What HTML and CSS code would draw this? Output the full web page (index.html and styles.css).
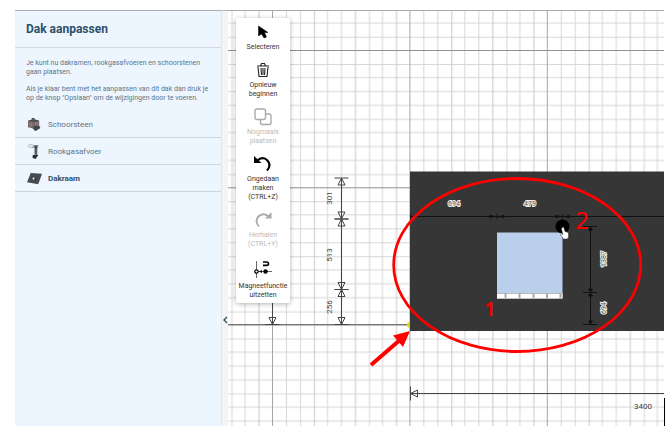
FILE: index.html
```html
<!DOCTYPE html>
<html lang="nl">
<head>
<meta charset="utf-8">
<title>Dak aanpassen</title>
<link rel="stylesheet" href="styles.css">
</head>
<body>
<div class="app">
  <aside class="sidebar">
    <h1 class="title">Dak aanpassen</h1>
    <div class="intro">
      <p>Je kunt nu dakramen, rookgasafvoeren en schoorstenen<br>gaan plaatsen.</p>
      <p>Als je klaar bent met het aanpassen van dit dak dan druk je<br>op de knop "Opslaan" om de wijzigingen door te voeren.</p>
    </div>
    <nav class="parts">
      <button class="part" type="button">
        <svg class="part-icon" viewBox="0 0 16 16" aria-hidden="true">
          <path d="M1 4l7-1 5 1v8l-4 3-3-3-5-1z" fill="#75686a"/>
          <path d="M1 4l6 1 6-1-6-2zM8 9l6 1v2l-5 3-3-3z" fill="#41464a"/>
          <path d="M5 1h3v3H5z" fill="#555"/>
          <path d="M3 6v4M5 6v4M9 6v3M11 6v3" stroke="#a47d76" fill="none"/>
        </svg>Schoorsteen</button>
      <button class="part" type="button">
        <svg class="part-icon" viewBox="0 0 16 16" aria-hidden="true">
          <ellipse cx="4" cy="2" rx="3" ry="1.5" fill="#e8ecee" stroke="#b8bfc3"/>
          <path d="M5 4l3-1" stroke="#999"/>
          <path d="M8 2h3v9H8z" fill="#596065"/>
          <path d="M7 2h5M8 4h3" stroke="#333"/>
          <path d="M6 12l4-1 2 1-3 4-3-1z" fill="#292e31"/>
        </svg>Rookgasafvoer</button>
      <button class="part part-active" type="button">
        <svg class="part-icon" viewBox="0 0 16 16" aria-hidden="true">
          <path d="M4 2l12 1-4 11L0 12z" fill="#454b4f"/>
          <path d="M6 6l4 1-1 3-4-1z" fill="#2f3538"/>
          <path d="M6 7l2 0v2l-2 0z" fill="#fff"/>
        </svg>Dakraam</button>
    </nav>
  </aside>
  <button class="collapse" type="button" aria-label="Paneel inklappen">
    <svg viewBox="0 0 6 8" width="6" height="8" aria-hidden="true"><path d="M5 1L2 4l3 3" fill="none" stroke="#2c4a5e" stroke-width="1.3"/></svg>
  </button>
  <main class="canvas">
    <svg class="drawing" role="img" aria-label="Dakvlak met maatvoering">
      <defs>
        <pattern id="grid" x="272" y="50" width="137.4" height="137.3" patternUnits="userSpaceOnUse">
          <path d="M14.5 0v138M28.5 0v138M55.5 0v138M69.5 0v138M97.5 0v138M110.5 0v138M0 14.5h138M0 41.5h138M0 55.5h138M0 69.5h138M0 82.5h138M0 96.5h138M0 110.5h138M0 124.5h138" stroke="#d6d6d6"/>
          <path d="M0 27.5h138" stroke="#d6d6d6"/>
          <path d="M42.5 0v138M83.5 0v138M124.5 0v138" stroke="#c8c8c8"/>
          <path d="M.5 0v138" stroke="#a6a6a6"/>
          <path d="M0 .5h138" stroke="#909090"/>
        </pattern>
        <path id="head" d="M0 0l-3.5 7h7zM-7 0h14" fill="none"/>
        <path id="small" d="M0 0h1M2 0l5-1.5v3zM0-2.5v5" fill="#111" stroke-width=".6"/>
      </defs>
      <g transform="translate(-228 -11)">
        <rect x="228" y="11" width="100%" height="100%" fill="url(#grid)"/>
        <g stroke="#444" fill="none">
          <path d="M341.500 178V325M272.500 300V325M410 393.500H1600"/>
          <path d="M228 324.500H410" stroke="#777"/>
          <use href="#head" x="341.500" y="178"/>
          <use href="#head" transform="translate(341.500 219) rotate(180)"/>
          <use href="#head" x="341.500" y="219"/>
          <use href="#head" transform="translate(341.500 289.500) rotate(180)"/>
          <use href="#head" x="341.500" y="289.500"/>
          <use href="#head" transform="translate(341.500 324.500) rotate(180)"/>
          <use href="#head" transform="translate(272.500 324.500) rotate(180)"/>
          <use href="#head" transform="translate(410.500 393.500) rotate(-90)"/>
        </g>
        <g class="measure" text-anchor="middle">
          <text transform="translate(332 198) rotate(-90)">301</text>
          <text transform="translate(332 255) rotate(-90)">513</text>
          <text transform="translate(332 307) rotate(-90)">256</text>
          <text x="643" y="409">3400</text>
        </g>
        <circle cx="410" cy="325" r="3" fill="#d9d900"/>
        <rect x="410" y="171.500" width="100%" height="159.500" fill="#363636"/>
        <g stroke="#111" fill="none">
          <path d="M410 216.500H1600M590.500 226V325"/>
          <use href="#small" x="497" y="216.500"/>
          <use href="#small" transform="translate(497 216.500) rotate(180)"/>
          <use href="#small" x="562.500" y="216.500"/>
          <use href="#small" transform="translate(562.500 216.500) rotate(180)"/>
          <path d="M410.500 214v5M583 226.500h14M583 292.500h14M583 324.500h14"/>
          <path d="M590.500 227l-2 3h4zM590.500 292l-2-3h4zM590.500 293l-2 3h4zM590.500 324l-2-3h4z" fill="#111"/>
        </g>
        <g class="measure-light" text-anchor="middle">
          <text x="454" y="206">694</text>
          <text x="530" y="206">479</text>
          <text transform="translate(606 259) rotate(-90)">1387</text>
          <text transform="translate(606 308) rotate(-90)">694</text>
        </g>
        <rect x="497" y="232.500" width="65.500" height="66" fill="#b9cfec"/>
        <rect x="497" y="293" width="65.500" height="5.500" fill="#fff"/>
        <path d="M497 293.500h65" stroke="#bbb"/>
        <path d="M505.500 293v5M519.500 293v5M533.500 293v5M547 293v5M560.500 293v5" stroke="#aaa" stroke-width="2"/>
        <circle cx="562.500" cy="226.500" r="7" fill="#000"/>
        <path d="M562 227.500q1.500-1 2 .5l1 3.500 2 .5 1.500 1v4l-1 2h-4l-3-4.500q0-1 1.500-.5l1 .5-1.500-5z" fill="#fff" stroke="#333" stroke-width=".5"/>
        <ellipse cx="517.200" cy="265" rx="123.500" ry="86.500" fill="none" stroke="#f00" stroke-width="2.800"/>
        <path d="M371 365L401 339" stroke="#f00" stroke-width="4"/>
        <path d="M410 331l-17 4.500 10 11.500z" fill="#f00"/>
        <g class="note" text-anchor="middle">
          <text class="note-one" x="490" y="316">1</text>
          <text class="note-two" x="582" y="229">2</text>
        </g>
      </g>
    </svg>
    <div class="toolbar" role="toolbar" aria-label="Gereedschap">
      <button class="tool" type="button">
        <svg width="18" height="18" viewBox="0 0 18 18" aria-hidden="true"><path d="M4.500 3v10l3-2 2.500 4 2.500-1-2-4.500h3.500z" fill="#000" stroke="#000" stroke-width=".5"/></svg>
        Selecteren</button>
      <button class="tool" type="button">
        <svg width="18" height="18" viewBox="0 0 18 18" aria-hidden="true"><path d="M3 5h12M6.500 5l1-2.500h3l1 2.500M4 6l1 9.500h8L14 6M7 7l.5 7M9 7v7M11 7l-.5 7" fill="none" stroke="#222" stroke-width="1.100"/></svg>
        Opnieuw<br>beginnen</button>
      <button class="tool" type="button" disabled>
        <svg width="18" height="18" viewBox="0 0 18 18" aria-hidden="true"><g fill="#fff" stroke="#aaa" stroke-width="1.400"><rect x="6.500" y="6" width="10.500" height="10.500" rx="2"/><rect x="1" y="1" width="10.500" height="10.500" rx="2"/></g></svg>
        Nogmaals<br>plaatsen</button>
      <button class="tool" type="button">
        <svg width="18" height="18" viewBox="0 0 18 18" aria-hidden="true"><path d="M3 6q5-5 10-1 5 5 0 10.500" fill="none" stroke="#000" stroke-width="2.200"/><path d="M0 1v7h7.500z" fill="#000"/></svg>
        Ongedaan<br>maken<br>(CTRL+Z)</button>
      <button class="tool" type="button" disabled>
        <svg width="18" height="18" viewBox="0 0 18 18" aria-hidden="true"><path d="M15 6q-5-5-10-1-5 5 0 10.500" fill="none" stroke="#aaa" stroke-width="1.800"/><path d="M17.500 1v6.500h-6.500z" fill="#aaa"/></svg>
        Herhalen<br>(CTRL+Y)</button>
      <button class="tool" type="button">
        <svg width="18" height="22" viewBox="0 0 18 22" aria-hidden="true"><path d="M2.500 3v17M2 13.500h16" stroke="#666"/><circle cx="2.500" cy="13.500" r="1.700" fill="#fff" stroke="#000" stroke-width="1.200"/><circle cx="11.500" cy="13.500" r="2.200"/><path d="M5 13.500l3-1.500v3z"/><path d="M9 4h3.500q2 0 2 1.700t-2 1.700H9" fill="none" stroke="#000" stroke-width="1.600"/></svg>
        Magneetfunctie<br>uitzetten</button>
    </div>
  </main>
  <div class="edge"></div>
</div>
</body>
</html>
```
FILE: styles.css
```css
* {
  box-sizing: border-box;
}

body {
  margin: 0;
  background: #fff;
  font-family: Roboto, "Liberation Sans", sans-serif;
}

button {
  margin: 0;
  border: 0;
  background: none;
  font: inherit;
  color: inherit;
}

.app {
  display: flex;
  height: 100vh;
  padding: 10px 5px 3px 15px;
}

.sidebar {
  flex: none;
  width: 206px;
  border-top: 1px solid #a8b0b8;
  background: #edf6ff;
  color: #5b7586;
}

.title {
  margin: 0;
  height: 37px;
  padding: 0 11px;
  border-bottom: 1px solid #d3d9de;
  font-size: 12px;
  font-weight: 700;
  line-height: 36px;
  color: #2c5068;
}

.intro {
  padding: 11px 0 0 11px;
  font-size: 7px;
  line-height: 9px;
  white-space: nowrap;
}

.intro p {
  margin: 0 0 8px;
}

.part {
  display: flex;
  align-items: center;
  gap: 6px;
  width: 100%;
  height: 27px;
  padding: 0 12px;
  border-bottom: 1px solid #cdd5dc;
  font-size: 8px;
  text-align: left;
}

.part-icon {
  width: 15px;
  height: 15px;
}

.part-active {
  font-weight: 700;
  color: #2c5068;
}

.collapse {
  display: flex;
  flex: none;
  align-items: center;
  width: 7px;
  padding: 202px 0 0;
  border-top: 1px solid #b5b5b5;
  border-left: 1px solid #e3e6e9;
  background: #f4f4f4;
}

.canvas {
  position: relative;
  flex: 1;
  min-width: 0;
  border-top: 1px solid #aaa;
  overflow: hidden;
}

.drawing {
  display: block;
  width: 100%;
  height: 100%;
}

.toolbar {
  position: absolute;
  top: 7px;
  left: 8px;
  display: flex;
  flex-direction: column;
  gap: 9px;
  width: 54px;
  padding: 5px 0 3px;
  border-radius: 2px;
  background: #fff;
  box-shadow: 0 1px 5px rgba(0, 0, 0, 0.3);
}

.tool {
  padding: 0;
  font-size: 7px;
  line-height: 9px;
  color: #333;
  white-space: nowrap;
}

.tool svg {
  display: block;
  margin: 0 auto 2px;
}

.tool:disabled {
  color: #bbb;
}

.measure {
  font-size: 8px;
  fill: #444;
}

.measure-light {
  font-size: 7px;
  fill: #555;
  stroke: #eee;
  stroke-width: 2px;
  paint-order: stroke;
}

.note {
  font-family: "Noto Sans", sans-serif;
  fill: #f00;
}

.note-one {
  font-size: 20px;
  font-weight: 600;
}

.note-two {
  font-size: 24px;
}

.edge {
  align-self: flex-end;
  width: 1px;
  height: 28px;
  background: #000;
}
```
